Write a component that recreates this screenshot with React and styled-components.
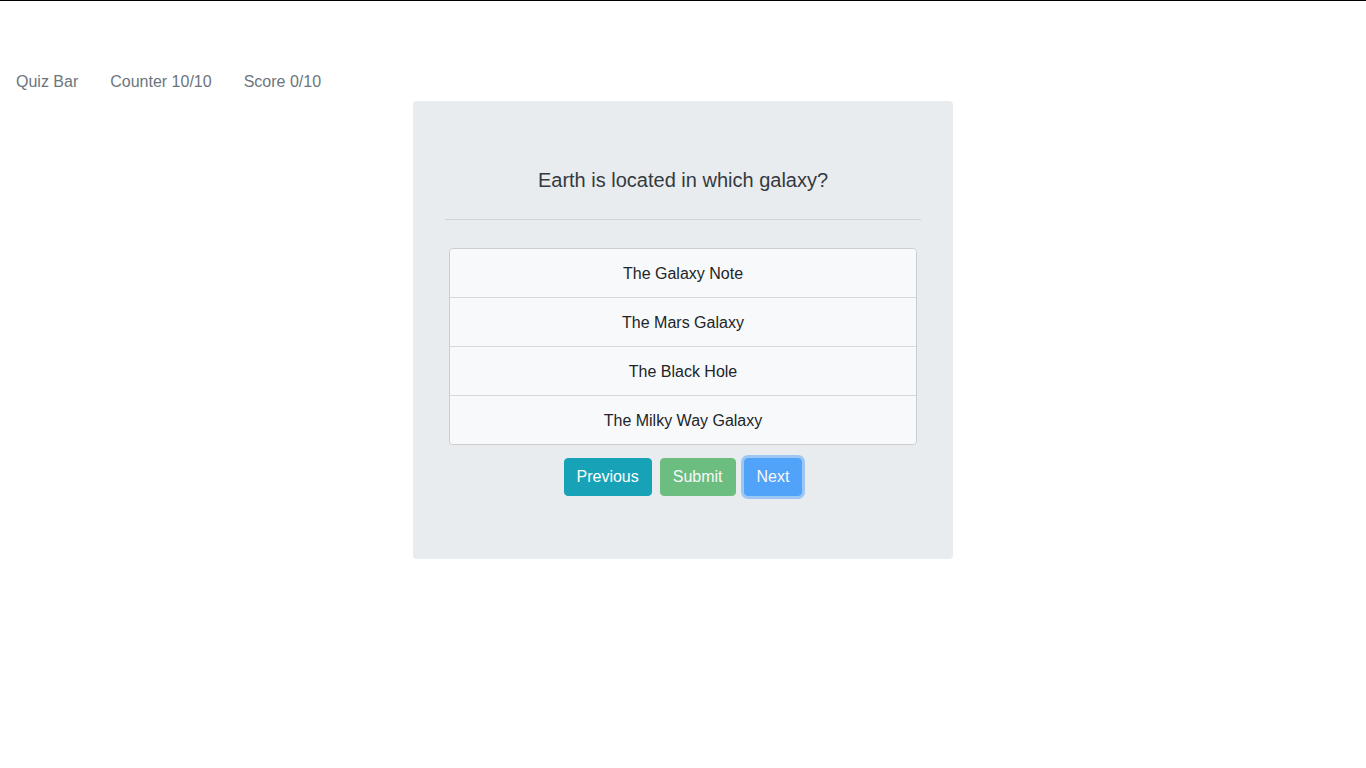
import React from 'react'
import styled, { createGlobalStyle } from 'styled-components'

const GlobalStyle = createGlobalStyle`
  html, body {
    margin: 0;
    padding: 0;
    background: #fff;
  }
  body {
    font-family: "Liberation Sans", Arial, sans-serif;
    font-size: 16px;
    line-height: 1.5;
    color: #212529;
  }
`

const Page = styled.div`
  border-top: 1px solid #000;
  padding-top: 60px;
`

const Nav = styled.nav`
  display: flex;
  height: 40px;
  align-items: center;
`

const NavLink = styled.a`
  padding: 9px 16px 7px;
  color: #6c757d;
  text-decoration: none;
`

const Card = styled.div`
  width: 540px;
  margin: 0 auto;
  box-sizing: border-box;
  background: #e9ecef;
  border-radius: 4px;
  padding: 64px 32px 63px;
`

const Question = styled.h5`
  margin: 0;
  padding-top: 3px;
  font-size: 20px;
  font-weight: 400;
  line-height: 24px;
  text-align: center;
  color: #343a40;
`

const Rule = styled.hr`
  margin: 27px 0 28px;
  border: 0;
  border-top: 1px solid rgba(0, 0, 0, 0.1);
`

const List = styled.ul`
  margin: 0 4px;
  padding: 0;
  list-style: none;
  border: 1px solid rgba(0, 0, 0, 0.125);
  border-radius: 4px;
  overflow: hidden;
`

const Item = styled.li`
  background: #f8f9fa;
  padding: 13px 20px 11px;
  text-align: center;
  color: #212529;
  line-height: 24px;
  & + & {
    border-top: 1px solid rgba(0, 0, 0, 0.125);
  }
`

const Actions = styled.div`
  display: flex;
  justify-content: center;
  gap: 8px;
  margin-top: 13px;
`

const Button = styled.button`
  font-family: inherit;
  font-size: 16px;
  line-height: 24px;
  padding: 6px 12px;
  border: 1px solid ${p => p.$color};
  border-radius: 4px;
  background: ${p => p.$color};
  color: #fff;
  opacity: ${p => (p.disabled ? 0.65 : 1)};
  box-shadow: ${p => (p.$focus ? '0 0 0 3px rgba(0, 123, 255, 0.5)' : 'none')};
  cursor: pointer;
`

const answers = [
  'The Galaxy Note',
  'The Mars Galaxy',
  'The Black Hole',
  'The Milky Way Galaxy',
]

export default function App() {
  return (
    <>
      <GlobalStyle />
      <Page>
        <Nav>
          <NavLink href="#">Quiz Bar</NavLink>
          <NavLink href="#">Counter 10/10</NavLink>
          <NavLink href="#">Score 0/10</NavLink>
        </Nav>
        <Card>
          <Question>Earth is located in which galaxy?</Question>
          <Rule />
          <List>
            {answers.map(a => (
              <Item key={a}>{a}</Item>
            ))}
          </List>
          <Actions>
            <Button $color="#17a2b8">Previous</Button>
            <Button $color="#28a745" disabled>Submit</Button>
            <Button $color="#007bff" disabled $focus>Next</Button>
          </Actions>
        </Card>
      </Page>
    </>
  )
}
